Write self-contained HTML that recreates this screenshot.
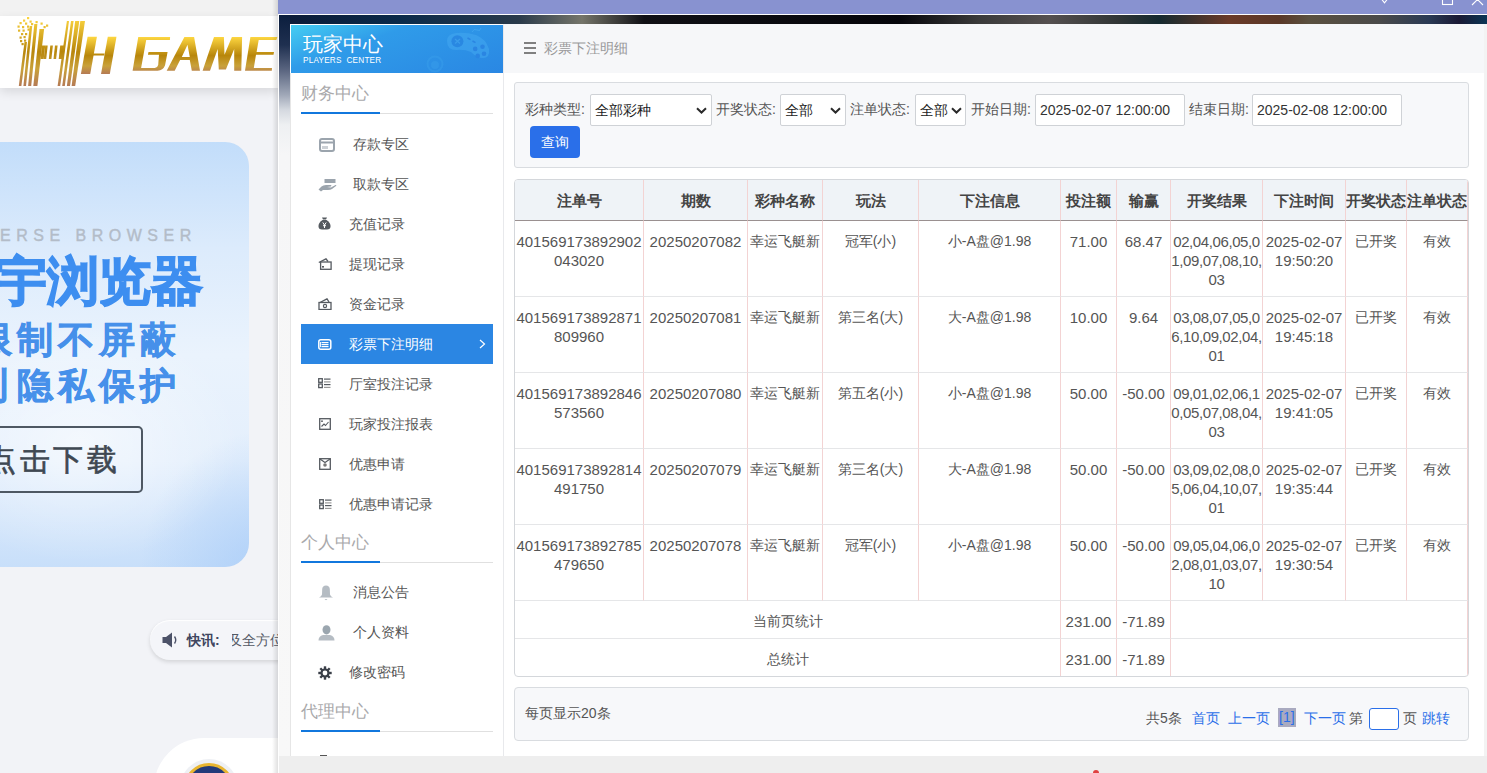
<!DOCTYPE html>
<html><head><meta charset="utf-8">
<style>
*{box-sizing:border-box;margin:0;padding:0}
html,body{width:1487px;height:773px;overflow:hidden;font-family:"Liberation Sans",sans-serif;background:#f2f3f7;position:relative}
.a{position:absolute}
/* left page */
#lp{left:0;top:0;width:278px;height:773px;background:#f2f3f7;overflow:hidden}
#lp-top{left:0;top:0;width:278px;height:16px;background:#f2f2f2}
#lp-hdr{left:0;top:16px;width:278px;height:72px;background:#fff;box-shadow:0 4px 10px rgba(0,0,0,.11)}
#banner{left:-40px;top:142px;width:289px;height:425px;border-radius:24px;background:radial-gradient(ellipse 160px 120px at 120px 300px,rgba(255,255,255,.55),rgba(255,255,255,0)),radial-gradient(ellipse 120px 140px at 300px 430px,rgba(170,205,248,.8),rgba(170,205,248,0)),linear-gradient(180deg,#c2ddfa 0%,#dcebfc 25%,#eaf3fd 50%,#e4effc 75%,#c8dffa 100%);overflow:hidden}
#lp-edge{left:272px;top:0;width:6px;height:773px;background:linear-gradient(90deg,rgba(0,0,0,0),rgba(0,0,0,.12))}
/* dialog */
#dlg{left:278px;top:0;width:1209px;height:773px;background:#fff;overflow:hidden}
#dlg-title{left:0;top:0;width:1209px;height:14px;background:#8892d0}
#dlg-bgtop{left:1px;top:15px;width:1208px;height:9px;background:linear-gradient(90deg,#0c1a36 0px,#0a2a4a 120px,#2a3a4a 240px,#75756a 303px,#101015 365px,#05050a 620px,#3a3a3a 700px,#555050 770px,#303535 840px,#152a30 880px,#6a3a28 950px,#5a3828 1000px,#5a5040 1030px,#4a4a4a 1100px,#2a3a55 1150px,#1a1a35 1180px,#0a3555 1208px)}
#dlg-lstrip{left:1px;top:15px;width:11px;height:741px;background:linear-gradient(180deg,#0b1e3e 0px,#1f3050 30px,#5a6580 55px,#a0a8b8 80px,#d5d9e0 95px,#eef0f2 110px,#f6f6f7 140px,#f8f8f8 741px)}
#dlg-bottom{left:1px;top:756px;width:1208px;height:17px;background:#eeeeee}
#rstrip{left:1206px;top:24px;width:3px;height:732px;background:#f3f3f3}
#side{left:12px;top:24px;width:214px;height:732px;background:#fff;border-top:1px solid #fff;border-left:1px solid #e6e6e6;border-right:1px solid #e8e9ec}
#phdr{left:0;top:0;width:212px;height:48px;background:linear-gradient(160deg,#45cdf2 0%,#2f9be9 35%,#2a87e3 100%);color:#fff;overflow:hidden}
#content{left:226px;top:24px;width:980px;height:732px;background:#fff}
#crumb{left:0;top:0;width:980px;height:49px;background:#f6f7f9;color:#8a8a8a;font-size:14px}
.sec{color:#a9a9ab;font-size:17px;line-height:20px}
.secline{height:2px;background:linear-gradient(180deg,transparent 50%,#e0e0e0 50%);width:192px}
.secline i{display:block;width:79px;height:2px;background:#1177dd}
.mi{left:0;width:192px;height:40px;font-size:14px;color:#555;line-height:40px}
.mi .t{position:absolute;top:0}
.mi svg{position:absolute}
.mi.act{background:#2b86e3;color:#fff}
/* filter */
#filter{left:10px;top:58px;width:955px;height:86px;background:#f7f8fa;border:1px solid #d9dce0;border-radius:3px}
.lbl{font-size:14px;color:#555;line-height:16px}
.sel{background:#fff;border:1px solid #cfd2d6;border-radius:2px;height:32px;font-size:14px;color:#222;line-height:30px;padding-left:4px}
.sel svg{position:absolute;right:5px;top:11px}
#btn{left:15px;top:43px;width:50px;height:32px;background:#2a6fe9;border-radius:4px;color:#fff;font-size:14px;line-height:32px;text-align:center}
/* table */
#tbl{left:10px;top:155px;width:955px;height:498px;border:1px solid #d4d7db;border-radius:4px;overflow:hidden;background:#fff}
.grid{display:grid;grid-template-columns:129px 104px 75px 96px 142px 56px 54px 92px 83px 61px 61px;grid-template-rows:41px 76px 76px 76px 76px 76px 38px 38px}
.c{border-right:1px solid #f3d3d3;border-bottom:1px solid #e5e6e8;text-align:center;font-size:14px;color:#555;line-height:19px;padding-top:11px;overflow:hidden;white-space:nowrap}
.h{background:#eff3f7;border-bottom:1px solid #9a9090;font-weight:bold;font-size:15px;color:#444;padding-top:11px}
.n{font-size:15px}
.r{letter-spacing:-0.4px;overflow:visible}
.s{padding-top:11px}
/* pager */
#pager{left:10px;top:663px;width:955px;height:54px;background:#f7f8fa;border:1px solid #d9dce0;border-radius:4px;font-size:14px;color:#555}
.lk{color:#2a6fe9}
</style></head><body>
<div id="lp" class="a">
  <div id="lp-top" class="a"></div>
  <div id="lp-hdr" class="a"></div>
<svg class="a" style="left:0;top:16px" width="278" height="72" viewBox="0 16 278 72">
<defs><linearGradient id="gold" x1="0" y1="0" x2="0" y2="1" gradientUnits="objectBoundingBox"><stop offset="0" stop-color="#fdd640"/><stop offset="0.5" stop-color="#b8860b"/><stop offset="0.75" stop-color="#c9a13a"/><stop offset="1" stop-color="#b57a55"/></linearGradient>
<linearGradient id="gold2" x1="0" y1="17" x2="0" y2="86" gradientUnits="userSpaceOnUse"><stop offset="0" stop-color="#fdd640"/><stop offset="0.5" stop-color="#b8860b"/><stop offset="0.75" stop-color="#c9a13a"/><stop offset="1" stop-color="#b57a55"/></linearGradient>
<linearGradient id="gold3" x1="0" y1="37" x2="0" y2="74" gradientUnits="userSpaceOnUse"><stop offset="0" stop-color="#fdd640"/><stop offset="0.5" stop-color="#b8860b"/><stop offset="0.78" stop-color="#c9a13a"/><stop offset="1" stop-color="#b57a55"/></linearGradient></defs>
<g fill="url(#gold2)"><path d="M24.5 42 L27 42 L21.4 86 L18.8 86 Z"/><path d="M29.7 26 L32.2 26 L26 86 L23.4 86 Z"/><path d="M34.3 24 L37.4 24 L31.2 86 L28.1 86 Z"/><path d="M39.5 29 L44.1 29 L37.4 86 L33.3 86 Z"/><path d="M66.9 21 L69 21 L60.2 86 L57.6 86 Z"/><path d="M71 21 L73.6 21 L64.8 86 L62.2 86 Z"/><path d="M75.2 21 L79.3 21 L70 86 L66.9 86 Z"/><path d="M80.3 21 L85 21 L75.2 86 L71.6 86 Z"/><path d="M42 45.6 L45.2 45.6 L43.7 59 L40.5 59 Z"/><path d="M45.2 45.6 L47.7 45.6 L46.2 59 L43.7 59 Z"/><path d="M50.3 45.6 L52.9 45.6 L51.4 59 L48.8 59 Z"/><path d="M55 45.6 L57.6 45.6 L56.1 59 L53.5 59 Z"/><path d="M60.2 45.6 L64.3 45.6 L62.8 59 L58.7 59 Z"/><rect x="27" y="17" width="2.2" height="2.2"/><rect x="23" y="19.5" width="2.2" height="2.2"/><rect x="29.5" y="20.5" width="2.2" height="2.2"/><rect x="19.5" y="22" width="2.2" height="2.2"/><rect x="25" y="22.5" width="2.2" height="2.2"/><rect x="31" y="23" width="2.2" height="2.2"/><rect x="35.5" y="21" width="2.2" height="2.2"/><rect x="40.5" y="22.5" width="2.2" height="2.2"/><rect x="43.5" y="26" width="2.2" height="2.2"/><rect x="46" y="24.5" width="2.2" height="2.2"/><rect x="17.5" y="25.5" width="2.2" height="2.2"/><rect x="22" y="26" width="2.2" height="2.2"/><rect x="27" y="25.5" width="2.2" height="2.2"/><rect x="18" y="29.5" width="2.2" height="2.2"/><rect x="22.5" y="29.5" width="2.2" height="2.2"/><rect x="27.5" y="28.5" width="2.2" height="2.2"/><rect x="21" y="33" width="2.2" height="2.2"/><rect x="25" y="33" width="2.2" height="2.2"/><rect x="19.5" y="36.5" width="2.2" height="2.2"/><rect x="23.5" y="36" width="2.2" height="2.2"/><rect x="20" y="40" width="2.2" height="2.2"/><rect x="24" y="39.5" width="2.2" height="2.2"/><rect x="21.5" y="43" width="2.2" height="2.2"/></g>
<g fill="url(#gold3)">
<path d="M87.6 36.8 L96.9 36.8 L90.2 73.9 L80.9 73.9 Z"/><path d="M107.8 36.8 L116.5 36.8 L109.8 73.9 L101 73.9 Z"/><path d="M92.5 53.4 L104.5 53.4 L104.2 55.4 L92.2 55.4 Z"/>
<path d="M138.25 37.1 L170.1 37.1 L169.9 40 L146.2 40 L141.1 67.9 L154.8 67.9 Q157.6 67.6 158.2 65 L159 54.8 L147.9 54.8 L148.5 51.9 L167.6 51.9 L165 65.6 Q163 70.5 157.6 70.7 L132.6 70.7 Z"/>
<path d="M184.4 37.1 L194.1 37.1 L200 70.7 L191.8 70.7 L189.8 59.9 L180.1 59.9 L174.7 70.7 L166.7 70.7 Z M187.5 44.8 L181.8 57.1 L189.8 57.1 Z" fill-rule="evenodd"/>
<path d="M214 37.1 L223.9 37.1 L224.5 54.8 L231.9 37.1 L242.1 37.1 L241.3 70.7 L234.2 70.7 L234.2 49.1 L225.9 69.6 L218.8 69.6 L217.7 49.1 L210 70.7 L202.6 70.7 Z"/>
<path d="M250.4 37.1 L277.4 37.1 L276.3 40 L258.7 40 L256.6 51.9 L274 51.9 L273.5 54.8 L256 54.8 L253.8 67.9 L272 67.9 L271.8 70.7 L245 70.7 Z"/>
</g></svg>
  <div id="banner" class="a">
    <div class="a" style="left:40px;top:85px;font-size:16px;line-height:18px;letter-spacing:5.5px;color:#b3bcc8;-webkit-text-stroke:0.4px #b3bcc8;white-space:nowrap">ERSE BROWSER</div>
    <div class="a" style="left:35px;top:109px;font-size:52px;line-height:60px;font-weight:bold;color:#3d8ef0;-webkit-text-stroke:1.6px #3d8ef0;white-space:nowrap">宇浏览器</div>
    <div class="a" style="left:16px;top:177px;font-size:36px;line-height:42px;font-weight:bold;color:#4690ea;-webkit-text-stroke:0.6px #4690ea;letter-spacing:5px;white-space:nowrap">限制不屏蔽</div>
    <div class="a" style="left:16px;top:223px;font-size:36px;line-height:42px;font-weight:bold;color:#4690ea;-webkit-text-stroke:0.6px #4690ea;letter-spacing:5px;white-space:nowrap">刂隐私保护</div>
    <div class="a" style="left:0px;top:284px;width:183px;height:67px;border:2px solid #4e5863;border-radius:5px"></div>
    <div class="a" style="left:26px;top:301px;font-size:30px;line-height:34px;font-weight:normal;color:#3f4852;-webkit-text-stroke:0.6px #3f4852;letter-spacing:3.5px;white-space:nowrap">点击下载</div>
</div>
  <div class="a" style="left:150px;top:620px;width:180px;height:40px;border-radius:20px;background:#f4f5f9;box-shadow:0 2px 4px rgba(0,0,0,.13),inset 0 1px 1px #fff"></div>
<svg class="a" style="left:162px;top:632px" width="17" height="16" viewBox="0 0 17 16"><path d="M0.5 5 L4 5 L10 0.5 L10 15.5 L4 11 L0.5 11 Z" fill="#4c5268"/><path d="M12.5 4.5 Q15 8 12.5 11.5" fill="none" stroke="#4c5268" stroke-width="1.4"/></svg>
<div class="a" style="left:187px;top:632px;font-size:14px;line-height:16px;font-weight:bold;color:#404660">快讯:</div>
<div class="a" style="left:232px;top:630px;width:60px;height:20px;overflow:hidden"><div class="a" style="left:-4px;top:2px;font-size:14px;line-height:16px;color:#555a66;white-space:nowrap">及全方位</div></div>
<div class="a" style="left:154px;top:738px;width:200px;height:120px;border-radius:50px;background:#fff"></div>
<div class="a" style="left:184px;top:763px;width:50px;height:50px;border-radius:25px;background:#223a7a;border:3px solid #e8b530;box-shadow:0 0 0 4px #eef0f4"></div>
  <div id="lp-edge" class="a"></div>
</div>
<div id="dlg" class="a">
  <div id="dlg-title" class="a"></div>
  <svg class="a" style="left:1100px;top:0" width="109" height="14" viewBox="1378 0 109 14"><path d="M1381.5 -1 L1384.5 2.8 L1387.5 -1" fill="none" stroke="#fff" stroke-width="1.1"/><rect x="1442.5" y="-6" width="10" height="10.5" fill="none" stroke="#fff" stroke-width="1.1"/><path d="M1472 5 L1477.5 -0.5 L1483 5" fill="none" stroke="#fff" stroke-width="1.1"/></svg>
  <div id="dlg-bgtop" class="a"></div><div id="dlg-lstrip" class="a"></div>
  <div id="dlg-bottom" class="a"><div class="a" style="left:814px;top:14px;width:6px;height:6px;border-radius:3px;background:#e04040"></div></div>
  <div id="rstrip" class="a"></div>
  <div id="side" class="a">
    <div class="a" style="left:-1px;top:-1px;width:1px;height:49px;background:#fff"></div>
    <div id="phdr" class="a">
      <svg class="a" style="left:0;top:0" width="212" height="48" viewBox="291 25 212 48"><path d="M447 41 Q447 34 456 33 Q466 32 476 35 Q486 39 489 49 Q490 58 483 58 Q477 58 471 52 Q464 49 456 50 Q447 50 447 41 Z" fill="#43a8f0" opacity="0.55"/><circle cx="457.4" cy="41.2" r="6" fill="#2682e0" opacity="0.8"/><path d="M455 39 L460 43.5 M460 39 L455 43.5" stroke="#3a9cea" stroke-width="1.3"/><path d="M467.5 38 L470.5 39.6 M472.5 41 L475.5 42.6" stroke="#2a85e2" stroke-width="1.6"/><circle cx="475.2" cy="48.9" r="2.3" fill="#2a85e2"/><circle cx="482.5" cy="46.8" r="2.3" fill="#2a85e2"/><circle cx="477.7" cy="55.9" r="2.3" fill="#2a85e2"/><circle cx="484" cy="53.8" r="2.3" fill="#2a85e2"/><path d="M472 32 Q474 28 477 30 Q480 32 481 28" fill="none" stroke="#48acf2" stroke-width="1" opacity="0.6"/><circle cx="435" cy="64" r="7.5" fill="none" stroke="#3aa0ec" stroke-width="2" opacity="0.45"/><circle cx="435" cy="65" r="4" fill="#3aa0ec" opacity="0.45"/></svg>
      <div class="a" style="left:12px;top:9px;font-size:19.5px;line-height:20px">玩家中心</div>
      <div class="a" style="left:12px;top:31px;font-size:8.2px;line-height:10px;letter-spacing:0.2px;white-space:nowrap">PLAYERS&nbsp; CENTER</div>
    </div>
    <div class="a sec" style="left:10px;top:59px">财务中心</div>
    <div class="a secline" style="left:10px;top:87px"><i></i></div>
    <div class="a mi" style="left:10px;top:99px"><svg style="left:18px;top:14px" width="16" height="14" viewBox="0 0 16 14"><rect x="1" y="1" width="14" height="12" rx="2" fill="none" stroke="#9ba4ad" stroke-width="2"/><rect x="1" y="3.5" width="14" height="2" fill="#9ba4ad"/><rect x="3.5" y="8" width="1" height="3" fill="#9ba4ad"/><rect x="5.5" y="8" width="1" height="3" fill="#9ba4ad"/><rect x="7.5" y="8" width="1" height="3" fill="#9ba4ad"/></svg><span class="t" style="left:52px">存款专区</span></div>
    <div class="a mi" style="left:10px;top:139px"><svg style="left:17px;top:15px" width="19" height="13" viewBox="0 0 19 13"><rect x="6.5" y="0" width="11" height="4" fill="#9ba4ad"/><path d="M0.5 10.5 L3.5 7.5 Q5 6 8 6 L13 6 Q14 6.5 13 7.5 L9 8 L13 8.5 L17.5 6 Q19 5.5 18 7 L14 10 Q12.5 11 10 11 L5 11 L3 12.5 Z" fill="#9ba4ad"/></svg><span class="t" style="left:52px">取款专区</span></div>
    <div class="a mi" style="left:10px;top:179px"><svg style="left:17px;top:13px" width="13" height="13" viewBox="0 0 13 13"><path d="M4 0.5 L9 0.5 L8 2.5 L5 2.5 Z" fill="#555a60"/><path d="M4.5 3 L8.5 3 Q13 6 12.5 10 Q12 12.5 9 12.5 L4 12.5 Q1 12.5 0.5 10 Q0 6 4.5 3 Z" fill="#555a60"/><path d="M4.8 5.5 L6.5 8 L8.2 5.5 M6.5 8 L6.5 11 M5 8.7 L8 8.7" stroke="#fff" stroke-width="1" fill="none"/></svg><span class="t" style="left:48px">充值记录</span></div>
    <div class="a mi" style="left:10px;top:219px"><svg style="left:17px;top:14px" width="14" height="12" viewBox="0 0 14 12"><path d="M0.8 4.5 L8 0.8 L10 3.5" fill="none" stroke="#555a60" stroke-width="1.3"/><rect x="2.6" y="4" width="10.5" height="7.3" fill="#fff" stroke="#555a60" stroke-width="1.3"/><rect x="4" y="8" width="2" height="1.6" fill="#555a60"/></svg><span class="t" style="left:48px">提现记录</span></div>
    <div class="a mi" style="left:10px;top:259px"><svg style="left:17px;top:14px" width="14" height="12" viewBox="0 0 14 12"><path d="M1 5 L9 0.8 L11 4" fill="none" stroke="#555a60" stroke-width="1.3"/><rect x="1" y="4.5" width="12" height="7" fill="#fff" stroke="#555a60" stroke-width="1.3"/><circle cx="7" cy="8" r="1.6" fill="none" stroke="#555a60" stroke-width="1.2"/></svg><span class="t" style="left:48px">资金记录</span></div>
    <div class="a mi act" style="left:10px;top:299px"><svg style="left:17px;top:15px" width="14" height="11" viewBox="0 0 14 11"><rect x="0.8" y="0.8" width="12" height="9.4" rx="2" fill="none" stroke="#fff" stroke-width="1.5"/><rect x="3.5" y="3" width="7" height="1.2" fill="#fff"/><rect x="3.5" y="5" width="7" height="1.2" fill="#fff"/><rect x="3.5" y="7" width="7" height="1.2" fill="#fff"/><rect x="2" y="3" width="0.9" height="5.2" fill="#fff"/></svg><span class="t" style="left:48px">彩票下注明细</span><svg style="left:178px;top:15px" width="7" height="10" viewBox="0 0 7 10"><path d="M1 1 L5.5 5 L1 9" fill="none" stroke="#fff" stroke-width="1.2"/></svg></div>
    <div class="a mi" style="left:10px;top:339px"><svg style="left:17px;top:14px" width="13" height="11" viewBox="0 0 13 11"><rect x="0.7" y="0.7" width="3.6" height="3.6" fill="none" stroke="#555a60" stroke-width="1.3"/><rect x="0.7" y="6" width="3.6" height="3.6" fill="none" stroke="#555a60" stroke-width="1.3"/><rect x="6" y="0.5" width="6.5" height="1.2" fill="#555a60"/><rect x="6" y="3.3" width="6.5" height="1.2" fill="#999"/><rect x="6" y="6" width="6.5" height="1.2" fill="#555a60"/><rect x="6" y="8.8" width="6.5" height="1.2" fill="#999"/></svg><span class="t" style="left:48px">厅室投注记录</span></div>
    <div class="a mi" style="left:10px;top:379px"><svg style="left:18px;top:14px" width="12" height="12" viewBox="0 0 12 12"><rect x="0.7" y="0.7" width="10.6" height="10.6" fill="none" stroke="#555a60" stroke-width="1.3"/><path d="M2.5 8.5 L5 6 L6.5 7.5 L9.5 4" fill="none" stroke="#555a60" stroke-width="1.1"/><circle cx="3" cy="3.2" r="0.9" fill="#555a60"/></svg><span class="t" style="left:48px">玩家投注报表</span></div>
    <div class="a mi" style="left:10px;top:419px"><svg style="left:18px;top:14px" width="12" height="12" viewBox="0 0 12 12"><rect x="0.7" y="0.7" width="10.6" height="10.6" fill="none" stroke="#555a60" stroke-width="1.3"/><path d="M1 1 L6 4.5 L11 1" fill="none" stroke="#555a60" stroke-width="1.1"/><circle cx="6" cy="7" r="1.8" fill="#777"/></svg><span class="t" style="left:48px">优惠申请</span></div>
    <div class="a mi" style="left:10px;top:459px"><svg style="left:18px;top:15px" width="13" height="11" viewBox="0 0 13 11"><rect x="0.7" y="0.7" width="3.6" height="3.6" fill="none" stroke="#555a60" stroke-width="1.3"/><rect x="0.7" y="6" width="3.6" height="3.6" fill="none" stroke="#555a60" stroke-width="1.3"/><rect x="6" y="0.5" width="6.5" height="1.2" fill="#555a60"/><rect x="6" y="3.3" width="6.5" height="1.2" fill="#999"/><rect x="6" y="6" width="6.5" height="1.2" fill="#555a60"/><rect x="6" y="8.8" width="6.5" height="1.2" fill="#999"/></svg><span class="t" style="left:48px">优惠申请记录</span></div>
    <div class="a sec" style="left:10px;top:508px">个人中心</div>
    <div class="a secline" style="left:10px;top:536px"><i></i></div>
    <div class="a mi" style="left:10px;top:547px"><svg style="left:17px;top:13px" width="16" height="16" viewBox="0 0 16 16"><path d="M8 0.5 Q11.5 0.5 11.8 4 L12 9.5 Q12.5 11.5 15 12.5 L1 12.5 Q3.5 11.5 4 9.5 L4.2 4 Q4.5 0.5 8 0.5 Z" fill="#b5bcc3"/><path d="M6.5 14 L9.5 14 L8 15.3 Z" fill="#b5bcc3"/></svg><span class="t" style="left:52px">消息公告</span></div>
    <div class="a mi" style="left:10px;top:587px"><svg style="left:17px;top:13px" width="17" height="16" viewBox="0 0 17 16"><ellipse cx="8.5" cy="4.8" rx="4" ry="4.6" fill="#9ba6af"/><path d="M0.5 15.5 Q0.5 11 5 10 L12 10 Q16.5 11 16.5 15.5 Z" fill="#b5bcc3"/></svg><span class="t" style="left:52px">个人资料</span></div>
    <div class="a mi" style="left:10px;top:627px"><svg style="left:17px;top:14px" width="14" height="14" viewBox="0 0 14 14"><g fill="#3a3f48"><circle cx="7" cy="7" r="4.6"/><rect x="5.8" y="0.3" width="2.4" height="13.4"/><rect x="0.3" y="5.8" width="13.4" height="2.4"/><rect x="5.8" y="0.3" width="2.4" height="13.4" transform="rotate(45 7 7)"/><rect x="5.8" y="0.3" width="2.4" height="13.4" transform="rotate(-45 7 7)"/></g><circle cx="7" cy="7" r="2.4" fill="#fff"/></svg><span class="t" style="left:48px">修改密码</span></div>
    <div class="a sec" style="left:10px;top:677px">代理中心</div>
    <div class="a secline" style="left:10px;top:705px"><i></i></div>
    <div class="a" style="left:29px;top:730px;width:7px;height:1px;background:#555"></div>
  </div>
  <div id="content" class="a">
    <div id="crumb" class="a">
      <div class="a" style="left:20px;top:18px;width:12px;height:2px;background:#808080"></div><div class="a" style="left:20px;top:23px;width:12px;height:2px;background:#808080"></div><div class="a" style="left:20px;top:28px;width:12px;height:2px;background:#808080"></div><div class="a" style="left:40px;top:16px;font-size:14px;line-height:16px;color:#999">彩票下注明细</div>
    </div>
    <div id="filter" class="a">
      <div class="a lbl" style="left:10px;top:18px">彩种类型:</div>
      <div class="a sel" style="left:75px;top:11px;width:122px">全部彩种<svg style="position:absolute;right:4px;top:12px" width="11" height="7" viewBox="0 0 11 7"><path d="M1 1.2 L5.5 5.5 L10 1.2" fill="none" stroke="#2a2a2a" stroke-width="2"/></svg></div>
      <div class="a lbl" style="left:201px;top:18px">开奖状态:</div>
      <div class="a sel" style="left:265px;top:11px;width:66px">全部<svg style="position:absolute;right:4px;top:12px" width="11" height="7" viewBox="0 0 11 7"><path d="M1 1.2 L5.5 5.5 L10 1.2" fill="none" stroke="#2a2a2a" stroke-width="2"/></svg></div>
      <div class="a lbl" style="left:335px;top:18px">注单状态:</div>
      <div class="a sel" style="left:400px;top:11px;width:51px">全部<svg style="position:absolute;right:3px;top:12px" width="11" height="7" viewBox="0 0 11 7"><path d="M1 1.2 L5.5 5.5 L10 1.2" fill="none" stroke="#2a2a2a" stroke-width="2"/></svg></div>
      <div class="a lbl" style="left:456px;top:18px">开始日期:</div>
      <div class="a sel" style="left:520px;top:11px;width:150px;color:#333">2025-02-07 12:00:00</div>
      <div class="a lbl" style="left:674px;top:18px">结束日期:</div>
      <div class="a sel" style="left:737px;top:11px;width:150px;color:#333">2025-02-08 12:00:00</div>
      <div id="btn" class="a">查询</div>
    </div>
    <div id="tbl" class="a">
      <div class="grid">
        <div class="c h">注单号</div><div class="c h">期数</div><div class="c h">彩种名称</div><div class="c h">玩法</div><div class="c h">下注信息</div><div class="c h">投注额</div><div class="c h">输赢</div><div class="c h">开奖结果</div><div class="c h">下注时间</div><div class="c h">开奖状态</div><div class="c h">注单状态</div>

        <div class="c n">401569173892902<br>043020</div><div class="c n">20250207082</div><div class="c">幸运飞艇新</div><div class="c">冠军(小)</div><div class="c">小-A盘@1.98</div><div class="c n">71.00</div><div class="c n">68.47</div><div class="c n r">02,04,06,05,0<br>1,09,07,08,10,<br>03</div><div class="c n">2025-02-07<br>19:50:20</div><div class="c">已开奖</div><div class="c">有效</div>

        <div class="c n">401569173892871<br>809960</div><div class="c n">20250207081</div><div class="c">幸运飞艇新</div><div class="c">第三名(大)</div><div class="c">大-A盘@1.98</div><div class="c n">10.00</div><div class="c n">9.64</div><div class="c n r">03,08,07,05,0<br>6,10,09,02,04,<br>01</div><div class="c n">2025-02-07<br>19:45:18</div><div class="c">已开奖</div><div class="c">有效</div>

        <div class="c n">401569173892846<br>573560</div><div class="c n">20250207080</div><div class="c">幸运飞艇新</div><div class="c">第五名(小)</div><div class="c">小-A盘@1.98</div><div class="c n">50.00</div><div class="c n">-50.00</div><div class="c n r">09,01,02,06,1<br>0,05,07,08,04,<br>03</div><div class="c n">2025-02-07<br>19:41:05</div><div class="c">已开奖</div><div class="c">有效</div>

        <div class="c n">401569173892814<br>491750</div><div class="c n">20250207079</div><div class="c">幸运飞艇新</div><div class="c">第三名(大)</div><div class="c">大-A盘@1.98</div><div class="c n">50.00</div><div class="c n">-50.00</div><div class="c n r">03,09,02,08,0<br>5,06,04,10,07,<br>01</div><div class="c n">2025-02-07<br>19:35:44</div><div class="c">已开奖</div><div class="c">有效</div>

        <div class="c n">401569173892785<br>479650</div><div class="c n">20250207078</div><div class="c">幸运飞艇新</div><div class="c">冠军(小)</div><div class="c">小-A盘@1.98</div><div class="c n">50.00</div><div class="c n">-50.00</div><div class="c n r">09,05,04,06,0<br>2,08,01,03,07,<br>10</div><div class="c n">2025-02-07<br>19:30:54</div><div class="c">已开奖</div><div class="c">有效</div>

        <div class="c s" style="grid-column:span 5">当前页统计</div><div class="c n s">231.00</div><div class="c n s">-71.89</div><div class="c s" style="grid-column:span 4"></div>
        <div class="c s" style="grid-column:span 5;border-bottom:0">总统计</div><div class="c n s" style="border-bottom:0">231.00</div><div class="c n s" style="border-bottom:0">-71.89</div><div class="c s" style="grid-column:span 4;border-bottom:0"></div>
      </div>
    </div>
    <div id="pager" class="a">
      <div class="a" style="left:10px;top:17px;line-height:16px">每页显示20条</div>
      <div class="a" style="left:631px;top:22px;line-height:16px;white-space:nowrap">共5条</div>
      <div class="a lk" style="left:677px;top:22px;line-height:16px">首页</div>
      <div class="a lk" style="left:713px;top:22px;line-height:16px">上一页</div>
      <div class="a lk" style="left:763px;top:20px;line-height:19px;background:#a9aac0;padding:0 1px">[1]</div>
      <div class="a lk" style="left:789px;top:22px;line-height:16px">下一页</div>
      <div class="a" style="left:834px;top:22px;line-height:16px">第</div>
      <div class="a" style="left:854px;top:20px;width:30px;height:22px;border:1px solid #2a6fe9;border-radius:3px;background:#fff"></div>
      <div class="a" style="left:888px;top:22px;line-height:16px">页</div>
      <div class="a lk" style="left:907px;top:22px;line-height:16px">跳转</div>
    </div>
  </div>
</div>
</body></html>
